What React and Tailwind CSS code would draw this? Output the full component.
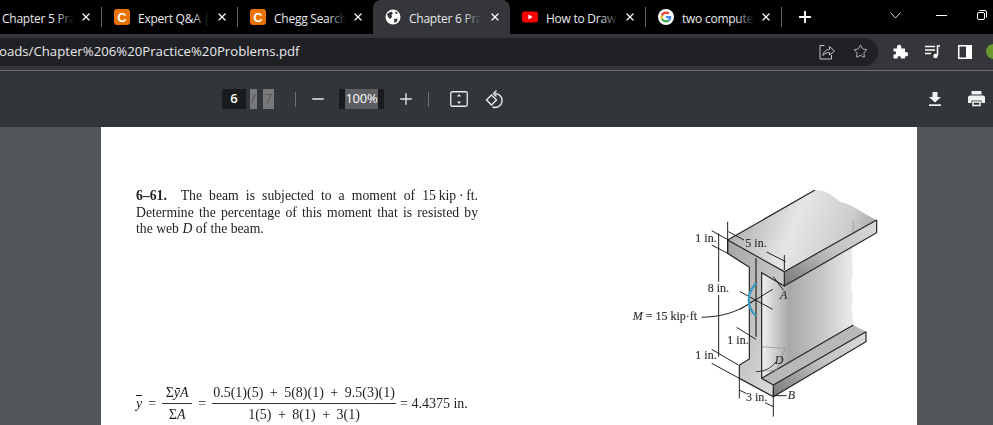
import React from "react";
import { X, Plus, Minus, Star } from "lucide-react";

function CheggIcon() {
  return (
    <span className="flex h-[16px] w-[16px] shrink-0 items-center justify-center rounded-[3px] bg-[#eb7100] font-['Liberation_Sans',sans-serif] text-[13px] font-bold leading-none text-white">
      C
    </span>
  );
}

function GlobeIcon() {
  return (
    <svg width="16" height="16" viewBox="0 0 16 16" className="shrink-0">
      <circle cx="8" cy="8" r="7.5" fill="#fff" />
      <path d="M2 5 L6 2.5 L8 4 L6.5 6 L7 8 L5 10 L3 8 Z M9 10 L12.5 9.5 L12 12.5 L9.5 14 Z M10 2 L13 4 L11 5.5 Z" fill="#35363a" />
    </svg>
  );
}

function YoutubeIcon() {
  return (
    <svg width="16" height="16" viewBox="0 0 16 16" className="shrink-0">
      <rect x="0" y="2.5" width="16" height="11" rx="3" fill="#f00" />
      <path d="M6.4 5.6 L10.6 8 L6.4 10.4 Z" fill="#fff" />
    </svg>
  );
}

function GoogleIcon() {
  return (
    <svg width="16" height="16" viewBox="0 0 16 16" className="shrink-0">
      <circle cx="8" cy="8" r="8" fill="#fff" />
      <path d="M13.2 8.2c0-.4 0-.8-.1-1.2H8v2.2h3a2.500 2.500 0 0 1-1.100 1.700l1.700 1.300c1-.9 1.600-2.300 1.600-4z" fill="#4285f4" />
      <path d="M8 13.400c1.500 0 2.700-.5 3.600-1.300l-1.700-1.300c-.5.300-1.100.5-1.900.5-1.400 0-2.700-1-3.100-2.300L3.100 10.300c.9 1.900 2.800 3.100 4.900 3.100z" fill="#34a853" />
      <path d="M4.900 9c-.2-.7-.2-1.400 0-2L3.100 5.700c-.7 1.500-.7 3.100 0 4.600z" fill="#fbbc05" />
      <path d="M8 4.700c.8 0 1.500.3 2.100.8l1.500-1.500C10.600 3.100 9.400 2.600 8 2.600c-2.100 0-4 1.200-4.900 3.100L4.900 7C5.300 5.700 6.600 4.700 8 4.700z" fill="#ea4335" />
    </svg>
  );
}

function Tab({ icon, title, active, width = "w-[136px]", first }) {
  const fade = active ? "from-[#35363a]" : "from-black";
  return (
    <div
      className={`relative flex h-full shrink-0 items-center ${width} ${
        active ? "rounded-t-[8px] bg-[#35363a]" : ""
      } ${first ? "pl-[2px]" : "pl-[12px]"}`}
    >
      {icon}
      <div className={`relative -mt-px w-[72px] shrink-0 overflow-hidden whitespace-nowrap ${icon ? "ml-[8px]" : ""}`}>
        <span className="text-[12px] leading-[16px] tracking-[-0.25px] text-[#e8eaed]">{title}</span>
        <span className={`absolute inset-y-0 right-0 w-[18px] bg-gradient-to-l ${fade} to-transparent`} />
      </div>
      <X size={12} strokeWidth={2.6} className="absolute right-[9px] top-[11px] text-white" />
    </div>
  );
}

function Sep() {
  return <div className="h-[20px] w-px shrink-0 bg-[#5f6368]" />;
}

function ShareIcon() {
  return (
    <svg width="16" height="16" viewBox="0 0 16 16" fill="none" stroke="#c4c7c9" strokeWidth="1">
      <path d="M5.500 1.500 H1 V15 H12.500 V11" />
      <path d="M4 11.500 C4.500 7.500 7.500 5.500 10.500 5.500 V2.500 L15.500 7 L10.500 11 V8.500 C8 8.500 5.500 9.500 4 11.500 Z" />
    </svg>
  );
}

function PuzzleIcon() {
  return (
    <svg width="15" height="15" viewBox="0 0 15 15" fill="#fff">
      <path d="M0.500 4.500 H4 V3 A2.200 2.200 0 0 1 8.400 3 V4.500 H12 V8 H13 A2.200 2.200 0 0 1 13 12.400 H12 V14.500 H7.800 V13.500 A1.600 1.600 0 0 0 4.600 13.500 V14.500 H0.500 V10.500 H1.500 A1.600 1.600 0 0 0 1.500 7.300 H0.500 Z" />
    </svg>
  );
}

function QueueIcon() {
  return (
    <svg width="16" height="14" viewBox="0 0 16 14" fill="none" stroke="#fff" strokeWidth="1.300">
      <path d="M0 1.500 H10 M0 5 H10 M0 8.500 H6" />
      <path d="M15 1 H12.500 V10.500" strokeWidth="1.500" />
      <circle cx="10.500" cy="11" r="2.200" fill="#fff" stroke="none" />
    </svg>
  );
}

function SidePanelIcon() {
  return (
    <svg width="14" height="14" viewBox="0 0 14 14">
      <rect width="14" height="14" fill="#fff" />
      <rect x="1.500" y="1.500" width="6.500" height="11" fill="#35363a" />
    </svg>
  );
}

function FitIcon() {
  return (
    <svg width="18" height="16" viewBox="0 0 18 16" fill="none">
      <rect x="0.750" y="0.750" width="16.500" height="14.500" rx="1.500" stroke="#e8eaed" strokeWidth="1.300" />
      <path d="M9 3 L11 5.500 H7 Z M9 13 L11 10.500 H7 Z" fill="#e8eaed" />
    </svg>
  );
}

function RotateIcon() {
  return (
    <svg width="20" height="20" viewBox="0 0 20 20" fill="none" stroke="#e8eaed" strokeWidth="1.400">
      <path d="M6.500 6 L1.500 11 L6.500 16 L11.500 11 Z" />
      <path d="M10 4.500 A7 7 0 1 1 7.500 18" />
      <path d="M11.500 1.500 L8.500 4.500 L11.500 7.500" />
    </svg>
  );
}

function DownloadIcon() {
  return (
    <svg width="14" height="14" viewBox="0 0 14 14" fill="#f1f3f4">
      <path d="M4.500 0 H9.500 V5 H13 L7 10.500 L1 5 H4.500 Z" />
      <rect x="1" y="12.300" width="12" height="1.700" />
    </svg>
  );
}

function PrintIcon() {
  return (
    <svg width="17" height="16" viewBox="0 0 17 16" fill="#f1f3f4">
      <rect x="3.500" y="0" width="10" height="3.500" />
      <path d="M2 4.500 H15 A2 2 0 0 1 17 6.500 V12 H13.500 V9.500 H3.500 V12 H0 V6.500 A2 2 0 0 1 2 4.500 Z" />
      <rect x="5" y="11" width="7" height="3.500" fill="none" stroke="#f1f3f4" strokeWidth="1.500" />
    </svg>
  );
}

function TabStrip() {
  return (
    <div className="flex h-[34px] items-center bg-black font-['Open_Sans',sans-serif]">
      <Tab first title="Chapter 5 Pra" width="w-[101px]" />
      <Sep />
      <Tab icon={<CheggIcon />} title="Expert Q&A |" width="w-[135px]" />
      <Sep />
      <Tab icon={<CheggIcon />} title="Chegg Search" width="w-[135px]" />
      <Tab active icon={<GlobeIcon />} title="Chapter 6 Pra" width="w-[137px]" />
      <Tab icon={<YoutubeIcon />} title="How to Draw" width="w-[135px]" />
      <Sep />
      <Tab icon={<GoogleIcon />} title="two computer" width="w-[135px]" />
      <Sep />
      <Plus size={18} strokeWidth={2.5} className="ml-[14px] text-white" />
      <svg width="11" height="7" viewBox="0 0 11 7" fill="none" stroke="#d8d8d8" className="-mt-[4px] ml-[76px]">
        <path d="M0.500 0.500 L5.500 6 L10.500 0.500" />
      </svg>
      <div className="-mt-[4px] ml-[35px] h-px w-[11px] bg-white" />
      <svg width="10" height="10" viewBox="0 0 10 10" fill="none" stroke="#fff" className="-mt-[4px] ml-[30px]">
        <rect x="0.500" y="2.500" width="7" height="7" rx="1.500" />
        <path d="M2.500 0.500 H8 A1.500 1.500 0 0 1 9.500 2 V7.500" />
      </svg>
    </div>
  );
}

function AddressBar() {
  return (
    <div className="flex h-[37px] items-center overflow-hidden border-b border-[#6b6c6e] bg-[#35363a] pb-px">
      <div className="-ml-[12px] flex h-[28px] w-[890px] shrink-0 items-center justify-between rounded-r-[14px] bg-[#202124] pl-[11px] pr-[10px]">
        <span className="font-['Open_Sans',sans-serif] text-[13.200px] text-[#e8eaed]">oads/Chapter%206%20Practice%20Problems.pdf</span>
        <div className="flex items-center gap-[18px]">
          <ShareIcon />
          <Star size={15} strokeWidth={1.3} className="text-[#d5d7d9]" />
        </div>
      </div>
      <div className="ml-[15px] flex shrink-0 items-center">
        <PuzzleIcon />
        <div className="ml-[17px]"><QueueIcon /></div>
        <div className="ml-[17px]"><SidePanelIcon /></div>
        <div className="ml-[14px] h-[15px] w-[15px] shrink-0 rounded-full bg-[#6a9a2f]" />
      </div>
    </div>
  );
}

function PdfToolbar() {
  return (
    <div className="flex h-[56px] items-center bg-[#323639] font-['Open_Sans',sans-serif] text-[13px] text-[#e8eaed]">
      <div className="ml-[222px] flex h-[20px] w-[24px] items-center justify-center bg-[#191b1c] font-semibold text-white">6</div>
      <span className="ml-[4px] flex h-[20px] w-[7px] items-center justify-center bg-[#77797b] text-[#555]">/</span>
      <span className="ml-[6px] flex h-[20px] w-[11px] items-center justify-center bg-[#77797b] text-[#555]">7</span>
      <div className="ml-[21px] h-[15px] w-px bg-[#6f7174]" />
      <Minus size={18} strokeWidth={1.8} className="ml-[13px] text-[#e8eaed]" />
      <div className="ml-[12px] flex h-[20px] w-[45px] items-center justify-center bg-[#191b1c]">
        <span className="flex h-[20px] w-[33px] items-center justify-center bg-[#5c5e61] text-[13px] font-medium tracking-[-0.2px] text-white">100%</span>
      </div>
      <Plus size={18} strokeWidth={1.8} className="ml-[13px] text-[#e8eaed]" />
      <div className="ml-[13px] h-[15px] w-px bg-[#6f7174]" />
      <div className="ml-[21px]"><FitIcon /></div>
      <div className="ml-[17px]"><RotateIcon /></div>
      <div className="ml-auto flex items-center gap-[26px] pr-[8px]">
        <DownloadIcon />
        <PrintIcon />
      </div>
    </div>
  );
}

function BeamDiagram() {
  const stroke = "#222";
  const label = { fontFamily: "'Liberation Serif', serif", fontSize: 36, fill: "#333", stroke: "#333", strokeWidth: 0.5 };
  return (
    <svg width="300" height="235" viewBox="0 0 900 705" className="shrink-0 blur-[0.4px]">
      <defs>
        <linearGradient id="topFace" x1="0" y1="0.300" x2="1" y2="0.500">
          <stop offset="0" stopColor="#a9a8a6" />
          <stop offset="0.450" stopColor="#e6e6e4" />
          <stop offset="0.800" stopColor="#cfcecc" />
          <stop offset="1" stopColor="#a8a7a5" />
        </linearGradient>
        <linearGradient id="webFace" x1="0" y1="0" x2="1" y2="0">
          <stop offset="0" stopColor="#f2f1f0" />
          <stop offset="0.300" stopColor="#a9a8a6" />
          <stop offset="0.650" stopColor="#c6c5c3" />
          <stop offset="1" stopColor="#ececea" />
        </linearGradient>
        <linearGradient id="edgeFace" x1="0" y1="1" x2="1" y2="0">
          <stop offset="0" stopColor="#77767a" />
          <stop offset="0.500" stopColor="#c0bfbd" />
          <stop offset="1" stopColor="#dcdbd9" />
        </linearGradient>
        <linearGradient id="endFace" x1="0" y1="0" x2="1" y2="1">
          <stop offset="0" stopColor="#a5a4a2" />
          <stop offset="1" stopColor="#e4e3e1" />
        </linearGradient>
      </defs>

      {/* web side */}
      <path d="M425 248 L493 288 L700 170 C690 200 705 240 695 270 C690 300 705 320 695 350 L700 405 L425 565 Z" fill="url(#webFace)" />
      {/* top flange */}
      <path d="M323 150 L585 0 C620 0 640 20 660 35 C700 45 730 70 770 90 L493 245 Z" fill="url(#topFace)" />
      <path d="M493 245 L770 90 V128 L493 288 Z" fill="url(#edgeFace)" />
      <path d="M770 90 V128 L493 288" stroke={stroke} strokeWidth="3.500" fill="none" />
      <path d="M700 90 V130" stroke="#999" strokeWidth="2" />
      {/* bottom flange */}
      <path d="M425 565 L700 405 L738 425 L460 585 Z" fill="#b9b8b6" />
      <path d="M460 585 L738 425 V455 L460 620 Z" fill="url(#edgeFace)" />
      <path d="M425 565 L700 405 M738 425 L460 585 M738 425 V455 L460 620" stroke={stroke} strokeWidth="3.500" fill="none" />
      {/* cross section */}
      <path
        d="M323 150 L493 245 V288 L425 248 V565 L460 585 V620 L358 565 V525 L388 507 V232 L323 190 Z"
        fill="url(#endFace)"
        stroke={stroke}
        strokeWidth="3.500"
      />
      <path d="M425 470 L495 475 L470 540 L410 545" stroke="#8c8c8c" strokeWidth="2" fill="none" />
      <path d="M323 150 L585 0 M493 245 L770 90" stroke={stroke} strokeWidth="3.500" fill="none" />
      <path d="M408 205 V440" stroke={stroke} strokeWidth="3.500" />
      <path d="M408 545 C430 545 455 535 468 515" stroke={stroke} strokeWidth="2.500" fill="none" />

      {/* dimensions */}
      <g stroke={stroke} strokeWidth="3" fill="none">
        <path d="M323 95 V190 M325 125 L372 150 M440 186 L497 215 M493 195 V240" />
        <path d="M275 122 L325 150 M275 165 L323 190 M296 130 V275 M296 315 V500 M275 478 L355 525 M275 520 L358 565" />
        <path d="M358 565 V625 M460 600 V680 M358 600 L378 610 M435 638 L460 650" />
        <path d="M350 412 L408 448 M460 260 L490 300" />
        <path d="M360 305 L458 358 M360 358 L458 298" />
        <path d="M245 382 C300 380 350 370 400 332" />
        <path d="M462 617 H500" />
      </g>
      <path d="M408 280 C380 310 378 350 408 378" stroke="#3d9cc4" strokeWidth="7" fill="none" />

      <text x="226" y="155" {...label}>1 in.</text>
      <text x="376" y="172" {...label}>5 in.</text>
      <text x="263" y="305" {...label}>8 in.</text>
      <text x="480" y="326" {...label} fontStyle="italic">A</text>
      <text x="38" y="391" {...label}><tspan fontStyle="italic">M</tspan> = 15 kip·ft</text>
      <text x="322" y="463" {...label}>1 in.</text>
      <text x="226" y="508" {...label}>1 in.</text>
      <text x="464" y="522" {...label} fontStyle="italic">D</text>
      <text x="378" y="633" {...label}>3 in.</text>
      <text x="503" y="627" {...label} fontStyle="italic">B</text>
    </svg>
  );
}

function Equation() {
  return (
    <div className="flex items-center text-[14px] leading-[17px] text-[#222]">
      <span className="italic">
        <span className="overline">y</span>
      </span>
      <span className="ml-[6px]">=</span>
      <div className="ml-[6px] flex w-[30px] flex-col items-center">
        <span className="w-full whitespace-nowrap border-b border-[#333] pb-[2px] text-center">Σ<span className="italic">ȳA</span></span>
        <span className="pt-[2px]">Σ<span className="italic">A</span></span>
      </div>
      <span className="ml-[6px]">=</span>
      <div className="ml-[6px] flex w-[184px] flex-col items-center [word-spacing:3px]">
        <span className="w-full whitespace-nowrap border-b border-[#333] pb-[2px] text-center">0.5(1)(5) + 5(8)(1) + 9.5(3)(1)</span>
        <span className="whitespace-nowrap pt-[2px]">1(5) + 8(1) + 3(1)</span>
      </div>
      <span className="ml-[4px] whitespace-nowrap">= 4.4375 in.</span>
    </div>
  );
}

function PdfPage() {
  return (
    <div className="ml-[101px] flex h-[298px] w-[816px] overflow-hidden bg-white font-['Liberation_Serif',serif]">
      <div className="ml-[35px] flex w-[342px] shrink-0 flex-col pt-[61px]">
        <div className="text-[13.700px] leading-[16.500px] text-[#222] blur-[0.3px]">
          <p className="text-justify [text-align-last:justify]"><b>6–61.</b>&nbsp; The beam is subjected to a moment of 15&#8201;kip&#8201;·&#8201;ft.</p>
          <p className="text-justify [text-align-last:justify]">Determine the percentage of this moment that is resisted by</p>
          <p>the web <i>D</i> of the beam.</p>
        </div>
        <div className="mt-[146px] blur-[0.3px]">
          <Equation />
        </div>
      </div>
      <div className="ml-[142px] pt-[63px]">
        <BeamDiagram />
      </div>
    </div>
  );
}

export default function App() {
  return (
    <div className="h-[425px] w-[993px] overflow-hidden bg-[#525659]">
      <TabStrip />
      <AddressBar />
      <PdfToolbar />
      <PdfPage />
    </div>
  );
}
